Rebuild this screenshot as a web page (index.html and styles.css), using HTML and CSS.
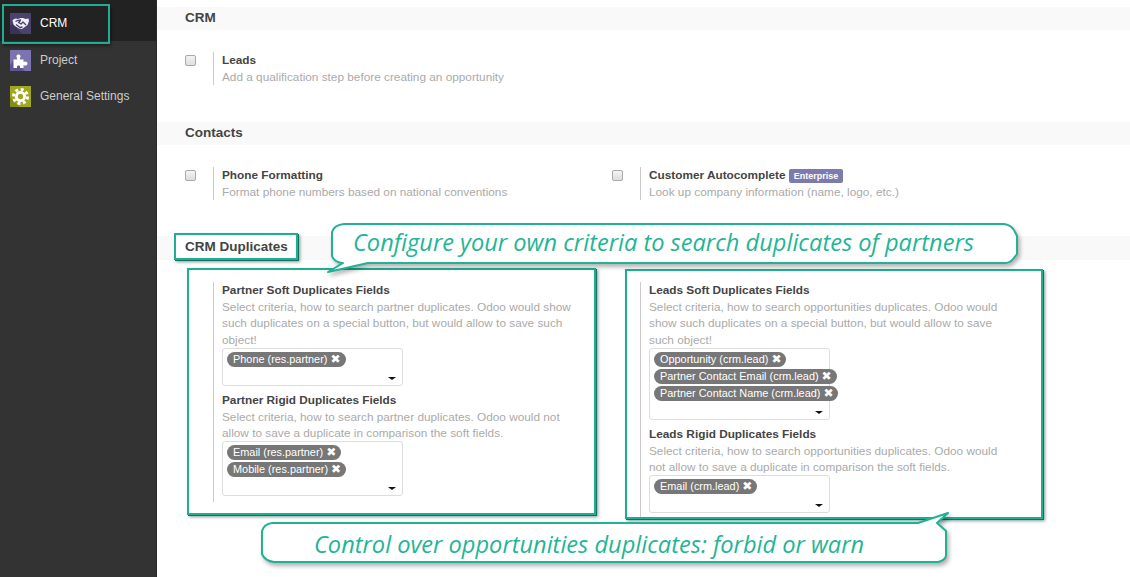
FILE: index.html
```html
<!DOCTYPE html>
<html lang="en">
<head>
<meta charset="utf-8">
<title>Settings</title>
<link rel="stylesheet" href="styles.css">
</head>
<body>
<div class="app">
  <nav class="sidebar">
    <div class="nav-item active">
      <svg class="nav-icon" viewBox="0 0 21 21"><rect width="21" height="21" fill="#4b4270"/><path d="M0 21V13L3 11 12 21Z" fill="#3a3358"/><path d="M2.500 7 5.500 5.500 8 6 10.500 5 13 5 15.500 6 18.500 5.500 19 8 17.500 12 12 16 9 15.500 5 13 3.500 11.500Z" fill="#f0eff4"/><path d="M5.500 8.500C7.500 7 9 7 11 7M11 7 8.500 9.500 11 11 13 9 16 12M6 11.500 10 14.500 12.500 14" fill="none" stroke="#4b4270" stroke-width="1.300" stroke-linejoin="round"/></svg>
      <span>CRM</span>
    </div>
    <div class="nav-item">
      <svg class="nav-icon" viewBox="0 0 21 21"><rect width="21" height="21" fill="#7c74b0"/><path d="M0 21V15L4 10 15 21Z" fill="#5f588f"/><path d="M3.500 9.500H7V8C5.800 6.500 6.500 4.500 8.500 4.500S11.200 6.500 10 8V9.500H13.500V12C15 10.800 17.500 11.500 17.500 13.500S15 16.200 13.500 15V18H10V16.500C10.500 15 7 15 7 16.500V18H3.500Z" fill="#fff"/></svg>
      <span>Project</span>
    </div>
    <div class="nav-item">
      <svg class="nav-icon" viewBox="0 0 21 21"><rect width="21" height="21" fill="#a0a821"/><path d="M0 21V11L10 21Z" fill="#858c16"/><circle cx="10.500" cy="10.500" r="5.500" fill="#fff"/><circle cx="10.500" cy="10.500" r="7" fill="none" stroke="#fff" stroke-width="3" stroke-dasharray="2.900 2.600"/><circle cx="10.500" cy="10.500" r="2.700" fill="#a0a821"/></svg>
      <span>General Settings</span>
    </div>
  </nav>

  <main class="content">
    <h2 class="band band-first">CRM</h2>
    <div class="row row-crm">
      <div class="setting">
        <span class="check"></span>
        <div class="body">
          <div class="label">Leads</div>
          <div class="help">Add a qualification step before creating an opportunity</div>
        </div>
      </div>
    </div>

    <h2 class="band">Contacts</h2>
    <div class="row row-contacts">
      <div class="setting">
        <span class="check"></span>
        <div class="body">
          <div class="label">Phone Formatting</div>
          <div class="help">Format phone numbers based on national conventions</div>
        </div>
      </div>
      <div class="setting">
        <span class="check"></span>
        <div class="body">
          <div class="label">Customer Autocomplete <span class="badge">Enterprise</span></div>
          <div class="help">Look up company information (name, logo, etc.)</div>
        </div>
      </div>
    </div>

    <div class="band band-dup"></div>
    <div class="row row-dup">
      <div class="setting">
        <span class="check-empty"></span>
        <div class="body">
          <div class="label">Partner Soft Duplicates Fields</div>
          <div class="help">Select criteria, how to search partner duplicates. Odoo would show such duplicates on a special button, but would allow to save such object!</div>
          <div class="picker">
            <span class="tag">Phone (res.partner) <b>✖</b></span>
            <i class="caret"></i>
          </div>
          <div class="label">Partner Rigid Duplicates Fields</div>
          <div class="help">Select criteria, how to search partner duplicates. Odoo would not allow to save a duplicate in comparison the soft fields.</div>
          <div class="picker">
            <span class="tag">Email (res.partner) <b>✖</b></span>
            <span class="tag">Mobile (res.partner) <b>✖</b></span>
            <i class="caret"></i>
          </div>
        </div>
      </div>
      <div class="setting">
        <span class="check-empty"></span>
        <div class="body">
          <div class="label">Leads Soft Duplicates Fields</div>
          <div class="help">Select criteria, how to search opportunities duplicates. Odoo would show such duplicates on a special button, but would allow to save such object!</div>
          <div class="picker">
            <span class="tag">Opportunity (crm.lead) <b>✖</b></span>
            <span class="tag">Partner Contact Email (crm.lead) <b>✖</b></span>
            <span class="tag">Partner Contact Name (crm.lead) <b>✖</b></span>
            <i class="caret"></i>
          </div>
          <div class="label">Leads Rigid Duplicates Fields</div>
          <div class="help">Select criteria, how to search opportunities duplicates. Odoo would not allow to save a duplicate in comparison the soft fields.</div>
          <div class="picker">
            <span class="tag">Email (crm.lead) <b>✖</b></span>
            <i class="caret"></i>
          </div>
        </div>
      </div>
    </div>
  </main>
</div>

<div class="frame frame-nav"></div>
<div class="frame frame-left"></div>
<div class="frame frame-right"></div>
<h2 class="frame frame-title">CRM Duplicates</h2>

<div class="callout callout-top">
  <svg class="bubble" viewBox="0 0 700 60" width="700" height="60"><path d="M18 2H678Q686 3 689 10L691 14V32L687 37Q684 41 678 41H42L2 50 17 41H16Q8 40 6 34V10Q8 3 18 2Z" fill="#fff" stroke="#20b295" stroke-width="2" stroke-linejoin="round"/></svg>
  <span class="callout-text">Configure your own criteria to search duplicates of partners</span>
</div>
<div class="callout callout-bottom">
  <svg class="bubble" viewBox="0 0 700 60" width="700" height="60"><path d="M12 11H658L688 1 677 11 686 19V43Q686 48 678 50H14Q5 49 2 42V19Q4 12 12 11Z" fill="#fff" stroke="#20b295" stroke-width="2" stroke-linejoin="round"/></svg>
  <span class="callout-text">Control over opportunities duplicates: forbid or warn</span>
</div>
</body>
</html>
```
FILE: styles.css
```css
* { box-sizing: border-box; }
html, body { margin: 0; height: 100%; overflow: hidden; }
body {
  position: relative;
  width: 1130px;
  height: 577px;
  background: #fff;
  font-family: "Liberation Sans", Arial, sans-serif;
  font-size: 11.800px;
  color: #444;
}
.app { display: flex; height: 577px; }

.sidebar {
  flex: 0 0 157px;
  background: #333;
  border-right: 1px solid #2a2a2a;
}
.nav-item {
  display: flex;
  align-items: center;
  gap: 9px;
  height: 36px;
  padding-left: 10px;
  color: #ccc;
  font-size: 12px;
}
.nav-item.active {
  height: 41px;
  padding-top: 5px;
  background: #222;
  color: #fff;
}
.nav-item:nth-child(2) { margin-top: 1px; }
.nav-icon { width: 21px; height: 21px; flex: none; }

.content { flex: 1; min-width: 0; padding-top: 7px; }
.band {
  margin: 0;
  height: 23px;
  padding-left: 28px;
  background: #f9f9f9;
  font-size: 13.500px;
  line-height: 21px;
  font-weight: bold;
  color: #444;
}
.band-dup { height: 24px; }

.row { display: flex; padding-left: 28px; }
.row-crm { height: 92px; padding-top: 22px; }
.row-contacts { height: 91px; padding-top: 22px; }
.row-dup { padding-top: 22px; }

.setting { flex: 0 0 427px; display: flex; align-items: flex-start; }
.check {
  flex: none;
  width: 11px;
  height: 11px;
  margin-top: 3px;
  margin-right: 17px;
  background: linear-gradient(#f4f4f4, #ddd);
  border: 1px solid #aaa;
  border-radius: 2px;
}
.check-empty { flex: none; width: 28px; }
.body {
  width: 370px;
  border-left: 1px solid #ccc;
  padding-left: 8px;
  line-height: 16.700px;
}
.label { font-weight: bold; color: #444; }
.help { color: #aaa; }
.badge {
  display: inline-block;
  height: 14px;
  padding: 0 5px;
  border-radius: 2px;
  background: #7c7bad;
  color: #fff;
  font-size: 9px;
  line-height: 14px;
}

.picker {
  position: relative;
  width: 181px;
  padding: 3px 0 16px 4px;
  margin-top: -1px;
  margin-bottom: 6px;
  border: 1px solid #ddd;
  border-radius: 3px;
  background: #fff;
}
.tag {
  display: table;
  height: 15px;
  margin-bottom: 2px;
  padding: 0 5px 0 6px;
  border-radius: 8px;
  background: #777;
  color: #fff;
  font-size: 10.900px;
  line-height: 15px;
  white-space: nowrap;
}
.tag b { font-size: 12px; line-height: 1; font-family: "DejaVu Sans", sans-serif; }
.caret {
  position: absolute;
  right: 6px;
  bottom: 5px;
  border-top: 3px solid #111;
  border-left: 4px solid transparent;
  border-right: 4px solid transparent;
}

.frame {
  position: absolute;
  margin: 0;
  border: 2px solid #1fae91;
  box-shadow: 1px 1px 0 #17705f, 2px 2px 3px rgba(0, 60, 50, .5);
}
.frame-nav { left: 2px; top: 4px; width: 108px; height: 40px; box-shadow: 1px 2px 3px rgba(0,0,0,.4); }
.frame-title {
  left: 174px; top: 233px; width: 124px; height: 27px;
  padding-left: 9px;
  background: #fff;
  font-size: 13.500px;
  font-weight: bold;
  line-height: 24px;
  white-space: nowrap;
  color: #444;
}
.frame-left { left: 187px; top: 268px; width: 409px; height: 247px; }
.frame-right { left: 625px; top: 269px; width: 418px; height: 250px; }

.callout { position: absolute; width: 700px; height: 60px; }
.bubble { display: block; filter: drop-shadow(2px 3px 2px rgba(0,0,0,.3)); }
.callout-text {
  position: absolute;
  color: #1fb596;
  font-family: "Open Sans", sans-serif;
  font-style: italic;
  font-size: 23.600px;
  line-height: 30px;
  white-space: nowrap;
}
.callout-top { left: 326px; top: 222px; }
.callout-top .callout-text { left: 27px; top: 5px; }
.callout-bottom { left: 260px; top: 512px; }
.callout-bottom .callout-text { left: 54px; top: 17px; }
```
